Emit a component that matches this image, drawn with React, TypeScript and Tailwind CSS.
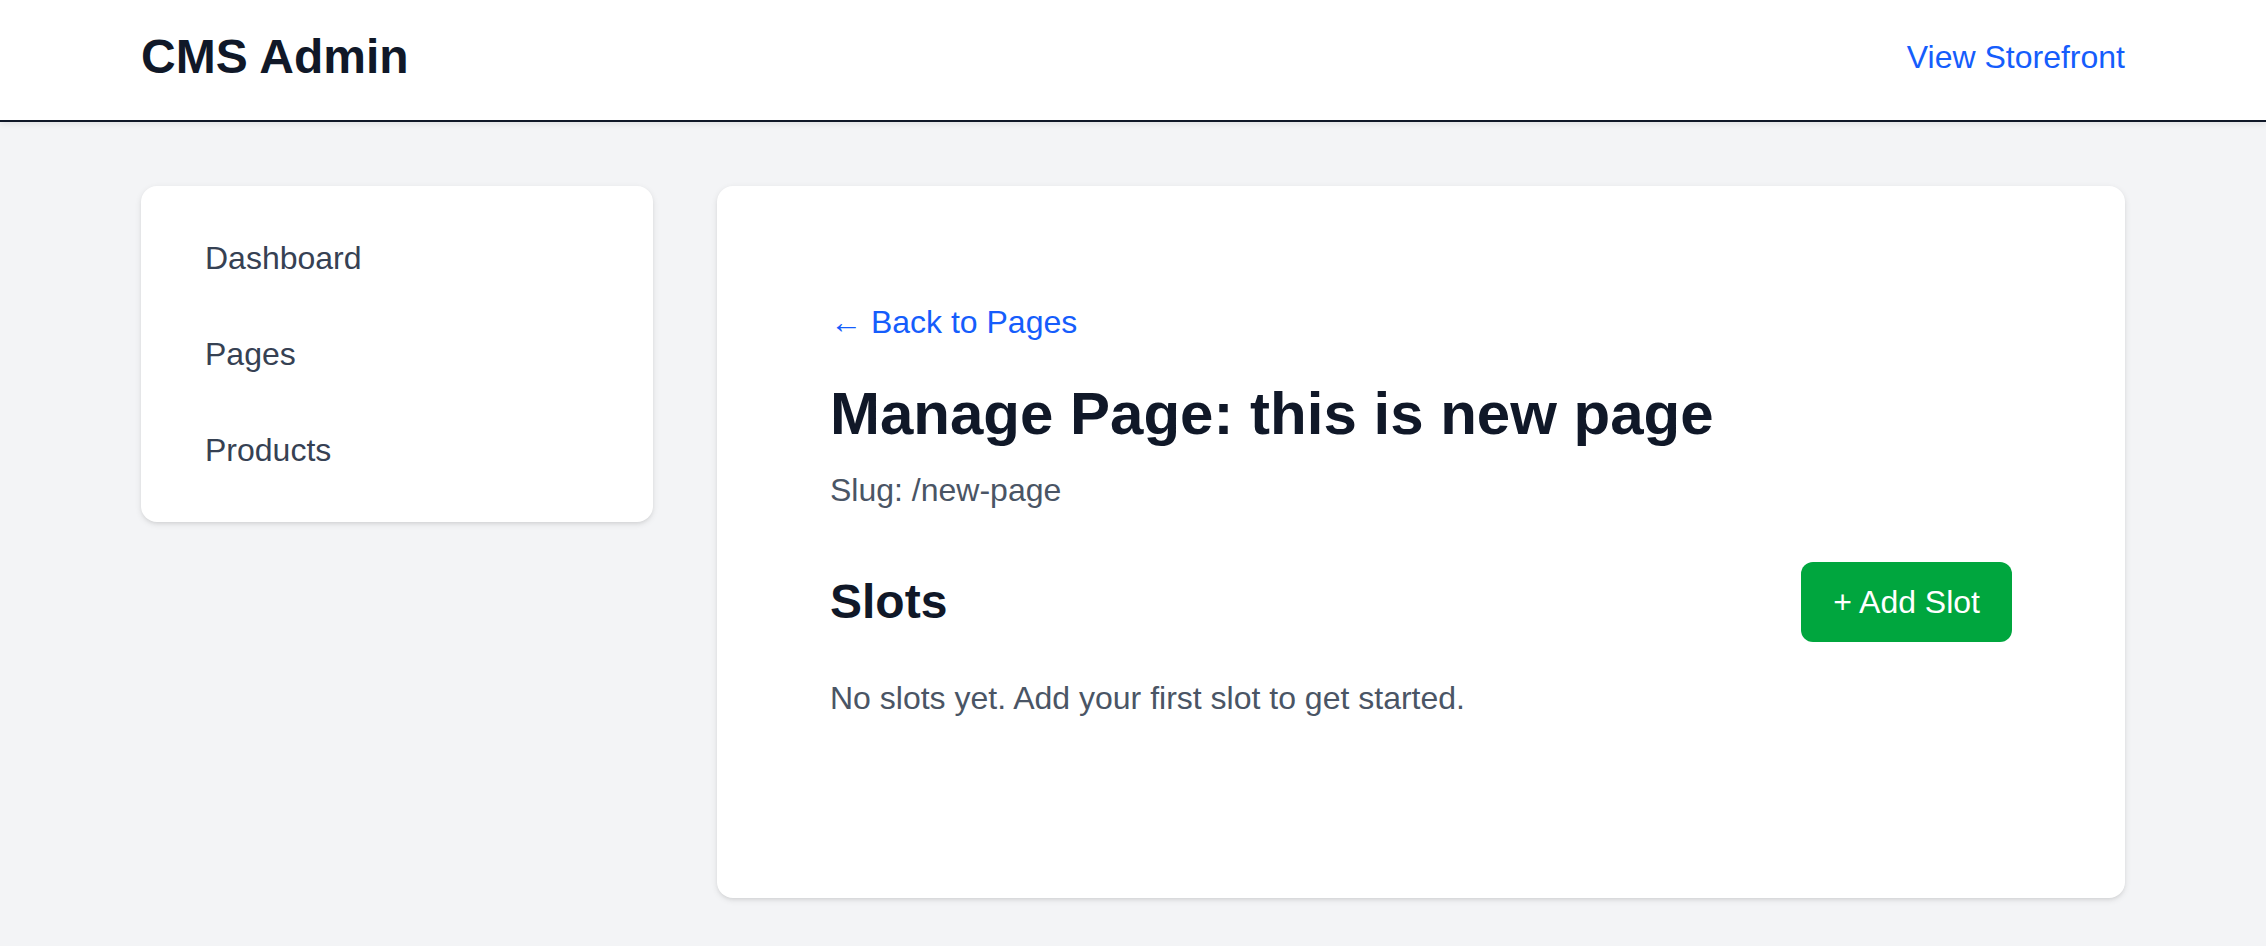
const NAV_ITEMS = ['Dashboard', 'Pages', 'Products'];

const cardShadow =
  'shadow-[0_2px_6px_0_rgb(0_0_0/0.1),0_2px_4px_-2px_rgb(0_0_0/0.1)]';

export default function App() {
  return (
    <div className="min-h-screen bg-gray-100 font-['Liberation_Sans',Arial,sans-serif]">
      {/* Top bar */}
      <header className="bg-white border-b-2 border-gray-900 shadow-[0_2px_6px_0_rgb(0_0_0/0.08)]">
        <div className="max-w-[1984px] mx-auto h-[120px] pb-[6px] flex items-center justify-between">
          <h1 className="text-[48px] leading-[64px] font-bold text-gray-900">CMS Admin</h1>
          <a href="#" className="text-[32px] leading-[48px] text-blue-600">
            View Storefront
          </a>
        </div>
      </header>

      <div className="max-w-[1984px] mx-auto py-[64px] flex items-start gap-[64px]">
        {/* Sidebar */}
        <aside className={`w-[512px] shrink-0 bg-white rounded-[16px] p-[32px] ${cardShadow}`}>
          <nav className="flex flex-col gap-[16px]">
            {NAV_ITEMS.map((item) => (
              <a
                key={item}
                href="#"
                className="block px-[32px] py-[16px] rounded-[12px] text-[32px] leading-[48px] text-gray-700"
              >
                {item}
              </a>
            ))}
          </nav>
        </aside>

        {/* Main panel */}
        <main className={`flex-1 bg-white rounded-[16px] px-[113px] pt-[112px] pb-[176px] ${cardShadow}`}>
          <a href="#" className="block text-[32px] leading-[48px] text-blue-600 mb-[32px]">
            ← Back to Pages
          </a>
          <h2 className="text-[60px] leading-[72px] font-bold text-gray-900 mb-[16px]">
            Manage Page: this is new page
          </h2>
          <p className="text-[32px] leading-[48px] text-gray-600 mb-[48px]">Slug: /new-page</p>

          <div className="flex items-center justify-between mb-[32px]">
            <h3 className="text-[48px] leading-[64px] font-bold text-gray-900">Slots</h3>
            <button className="bg-green-600 text-white text-[32px] leading-[48px] px-[32px] py-[16px] rounded-[12px]">
              + Add Slot
            </button>
          </div>

          <p className="text-[32px] leading-[48px] text-gray-600">
            No slots yet. Add your first slot to get started.
          </p>
        </main>
      </div>
    </div>
  );
}
